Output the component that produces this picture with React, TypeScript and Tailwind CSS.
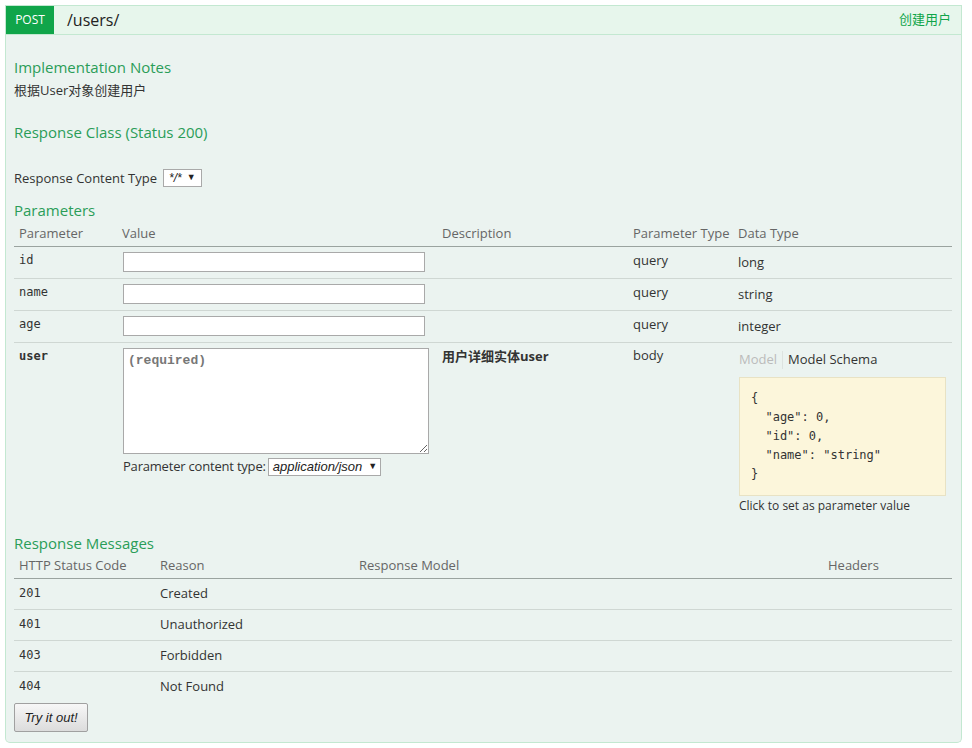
const params = [
  { name: 'id', type: 'query', data: 'long' },
  { name: 'name', type: 'query', data: 'string' },
  { name: 'age', type: 'query', data: 'integer' },
]

const responses = [
  { code: '201', reason: 'Created' },
  { code: '401', reason: 'Unauthorized' },
  { code: '403', reason: 'Forbidden' },
  { code: '404', reason: 'Not Found' },
]

function Heading({ children }: { children: React.ReactNode }) {
  return <h4 className="text-[15px] leading-[20px] text-[#2a9d58]">{children}</h4>
}

export default function App() {
  return (
    <div className="bg-white pl-[5px] pr-[10px] pt-[5px] pb-[4px] text-[13px] text-[#333] font-['Open_Sans','Noto_Sans_CJK_SC',sans-serif]">
      <div className="flex h-[30px] border border-[#c3e8d1] bg-[#e7f6ec]">
        <span className="flex w-[48px] items-center justify-center bg-[#10a54a] text-[12px] text-white">POST</span>
        <span className="ml-[13px] flex items-center text-[16px] text-[#222]">/users/</span>
        <span className="ml-auto mr-[10px] flex items-center text-[13px] text-[#10a54a]">创建用户</span>
      </div>

      <div className="rounded-b-[5px] border border-t-0 border-[#c3e8d1] bg-[#ebf3f0] pl-[8px] pr-[9px] pt-[22px] pb-[10px]">
        <Heading>Implementation Notes</Heading>
        <p className="mt-[4px] leading-[18px]">根据User对象创建用户</p>

        <div className="mt-[23px]">
          <Heading>Response Class (Status 200)</Heading>
        </div>

        <div className="mt-[27px] flex h-[18px] items-center">
          <span className="leading-[18px]">Response Content Type</span>
          <span className="ml-[6px] flex h-[18px] w-[39px] items-center gap-[5px] border border-[#a9a9a9] bg-white pl-[5px] text-[12px] italic text-[#222] font-['Liberation_Sans',sans-serif]">
            */* <span className="text-[9px] not-italic">▼</span>
          </span>
        </div>

        <div className="mt-[13px]">
          <Heading>Parameters</Heading>
        </div>

        <div className="mt-[2px]">
          <div className="grid h-[25px] grid-cols-[103px_320px_191px_105px_1fr] items-center border-b border-[#9aa39f] text-[#666]">
            <span className="pl-[5px]">Parameter</span>
            <span className="pl-[5px]">Value</span>
            <span className="pl-[5px]">Description</span>
            <span className="pl-[5px]">Parameter Type</span>
            <span className="pl-[5px]">Data Type</span>
          </div>
          {params.map((p) => (
            <div key={p.name} className="grid h-[32px] grid-cols-[103px_320px_191px_105px_1fr] border-b border-[#cfd7d3]">
              <span className="pl-[5px] pt-[6px] leading-[14px] text-[12px] font-['DejaVu_Sans_Mono',monospace]">{p.name}</span>
              <div className="pl-[6px] pt-[5px]">
                <input className="h-[20px] w-[302px] border border-[#a9a9a9] bg-white" />
              </div>
              <span />
              <span className="pl-[5px] pt-[6px] leading-[14px]">{p.type}</span>
              <span className="pl-[5px] pt-[8px] leading-[14px]">{p.data}</span>
            </div>
          ))}
          <div className="grid grid-cols-[103px_320px_191px_105px_1fr] pb-[5px]">
            <span className="pl-[5px] pt-[6px] leading-[14px] text-[12px] font-bold font-['DejaVu_Sans_Mono',monospace]">user</span>
            <div className="pl-[6px] pt-[5px]">
              <textarea
                readOnly
                placeholder="(required)"
                className="block h-[106px] w-[306px] border border-[#a9a9a9] bg-white px-[4px] py-[2px] text-[13px] font-bold font-['Liberation_Mono',monospace] placeholder:text-[#777]"
              />
              <div className="mt-[4px] flex h-[18px] items-center">
                <span className="tracking-[-0.2px]">Parameter content type:</span>
                <span className="ml-[2px] flex h-[18px] w-[113px] items-center border border-[#a9a9a9] bg-white pl-[4px] text-[13px] italic text-[#222] font-['Liberation_Sans',sans-serif]">
                  application/json <span className="ml-[6px] text-[9px] not-italic">▼</span>
                </span>
              </div>
            </div>
            <span className="pl-[5px] pt-[6px] leading-[14px] font-bold">用户详细实体user</span>
            <span className="pl-[5px] pt-[5px] leading-[14px]">body</span>
            <div className="pl-[6px] pr-[6px] pt-[8px]">
              <div className="flex h-[18px] items-center">
                <span className="text-[#bbb]">Model</span>
                <span className="mx-[5px] h-[18px] w-px bg-[#dde3e0]" />
                <span>Model Schema</span>
              </div>
              <pre className="mt-[8px] h-[119px] border border-[#e8e2c4] bg-[#fcf6db] pl-[11px] pt-[11px] text-[12px] leading-[19px] text-[#333] font-['DejaVu_Sans_Mono',monospace]">
{`{
  "age": 0,
  "id": 0,
  "name": "string"
}`}
              </pre>
              <p className="mt-[2px] leading-[16px] text-[12px]">Click to set as parameter value</p>
            </div>
          </div>
        </div>

        <div className="mt-[14px]">
          <Heading>Response Messages</Heading>
        </div>

        <div className="mt-[1px]">
          <div className="grid h-[25px] grid-cols-[141px_199px_469px_1fr] items-center border-b border-[#9aa39f] text-[#666]">
            <span className="pl-[5px]">HTTP Status Code</span>
            <span className="pl-[5px]">Reason</span>
            <span className="pl-[5px]">Response Model</span>
            <span className="pl-[5px]">Headers</span>
          </div>
          {responses.map((r, i) => (
            <div
              key={r.code}
              className={
                i < responses.length - 1
                  ? 'grid h-[31px] grid-cols-[141px_199px_469px_1fr] border-b border-[#cfd7d3]'
                  : 'grid h-[31px] grid-cols-[141px_199px_469px_1fr]'
              }
            >
              <span className="pl-[5px] pt-[7px] leading-[14px] text-[12px] font-['DejaVu_Sans_Mono',monospace]">{r.code}</span>
              <span className="pl-[5px] pt-[7px] leading-[14px]">{r.reason}</span>
              <span />
              <span />
            </div>
          ))}
        </div>

        <button className="flex h-[29px] w-[74px] items-center justify-center rounded-[2px] border border-[#a0a0a0] bg-gradient-to-b from-[#f7f7f7] to-[#dcdcdc] text-[13px] italic text-[#222] font-['Liberation_Sans',sans-serif]">
          Try it out!
        </button>
      </div>
    </div>
  )
}
